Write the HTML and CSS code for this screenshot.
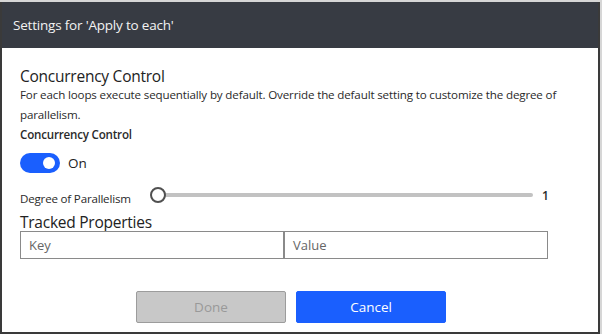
FILE: index.html
```html
<!DOCTYPE html>
<html>
<head>
<meta charset="utf-8">
<link rel="stylesheet" href="styles.css">
</head>
<body>
<div class="dialog">
  <div class="header"><span class="title">Settings for 'Apply to each'</span></div>
  <div class="content">
    <div class="section-title">Concurrency Control</div>
    <div class="desc">For each loops execute sequentially by default. Override the default setting to customize the degree of parallelism.</div>
    <div class="label">Concurrency Control</div>
    <div class="toggle-row">
      <span class="toggle"><span class="knob"></span></span>
      <span class="toggle-text">On</span>
    </div>
    <div class="slider-row">
      <span class="slider-label">Degree of Parallelism</span>
      <span class="slider"><span class="track"></span><span class="thumb"></span></span>
      <span class="slider-value">1</span>
    </div>
    <div class="section-title tracked">Tracked Properties</div>
    <div class="props">
      <div class="field">Key</div>
      <div class="field">Value</div>
    </div>
  </div>
  <div class="footer">
    <button class="btn done">Done</button>
    <button class="btn cancel">Cancel</button>
  </div>
</div>
</body>
</html>
```
FILE: styles.css
```css
html, body {
  margin: 0;
  padding: 0;
}
body {
  width: 602px;
  height: 334px;
  background: #d6d6d6;
  font-family: "Open Sans", "Noto Sans", sans-serif;
  color: #252525;
  overflow: hidden;
}
.dialog {
  margin-top: 2px;
  width: 596px;
  height: 330px;
  background: #fff;
  border-left: 2px solid #3a3a3a;
  border-right: 2px solid #3a3a3a;
  border-bottom: 2px solid #3a3a3a;
  display: flex;
  flex-direction: column;
}
.header {
  height: 46px;
  background: #373b43;
  display: flex;
  align-items: center;
  padding-left: 11px;
}
.title {
  color: #f2f2f2;
  font-size: 13.5px;
  letter-spacing: -0.2px;
}
.content {
  padding: 17px 20px 0 18px;
  display: flex;
  flex-direction: column;
}
.section-title {
  font-size: 15.5px;
  line-height: 22px;
  letter-spacing: -0.25px;
  color: #222;
}
.desc {
  font-size: 11.6px;
  line-height: 20px;
  letter-spacing: -0.15px;
  color: #2a2a2a;
  margin-top: -2px;
}
.label {
  font-size: 11.6px;
  font-weight: 600;
  line-height: 20px;
  letter-spacing: -0.2px;
  color: #2a2a2a;
}
.toggle-row {
  display: flex;
  align-items: center;
  gap: 8px;
  margin-top: 8px;
  height: 20px;
}
.toggle {
  width: 40px;
  height: 20px;
  border-radius: 10px;
  background: #1a5ffe;
  position: relative;
}
.knob {
  position: absolute;
  right: 5px;
  top: 4px;
  width: 12px;
  height: 12px;
  border-radius: 50%;
  background: #fff;
}
.toggle-text {
  font-size: 13.5px;
  color: #222;
}
.slider-row {
  display: flex;
  align-items: flex-start;
  margin-top: 14px;
  height: 25px;
}
.slider-label {
  font-size: 11.6px;
  line-height: 16px;
  letter-spacing: -0.2px;
  width: 130px;
  padding-top: 4px;
  color: #2a2a2a;
}
.slider {
  position: relative;
  width: 383px;
  height: 16px;
}
.track {
  position: absolute;
  left: 8px;
  right: 0;
  top: 6px;
  height: 4px;
  border-radius: 2px;
  background: #c2c2c2;
}
.thumb {
  position: absolute;
  left: 0;
  top: 0;
  width: 12px;
  height: 12px;
  border: 2px solid #505050;
  border-radius: 50%;
  background: #fff;
}
.slider-value {
  margin-left: 9px;
  font-size: 12px;
  line-height: 16px;
  font-weight: 600;
  color: #2a2a2a;
  padding-top: 1px;
}
.tracked {
  line-height: 20px;
}
.props {
  display: flex;
  margin-top: -1px;
}
.field {
  width: 264px;
  height: 28px;
  box-sizing: border-box;
  border: 1px solid #8a8a8a;
  font-size: 13px;
  color: #666;
  padding: 4px 8px;
  line-height: 18px;
}
.footer {
  display: flex;
  gap: 10px;
  padding-left: 134px;
  margin-top: 32px;
}
.btn {
  width: 150px;
  height: 32px;
  border-radius: 2px;
  font-family: "Open Sans", "Noto Sans", sans-serif;
  font-size: 13.5px;
  padding: 0;
}
.done {
  background: #c8c8c8;
  border: 1px solid #9c9c9c;
  color: #999;
}
.cancel {
  background: #1a5ffe;
  border: 1px solid #1a5ffe;
  color: #fff;
}
```
